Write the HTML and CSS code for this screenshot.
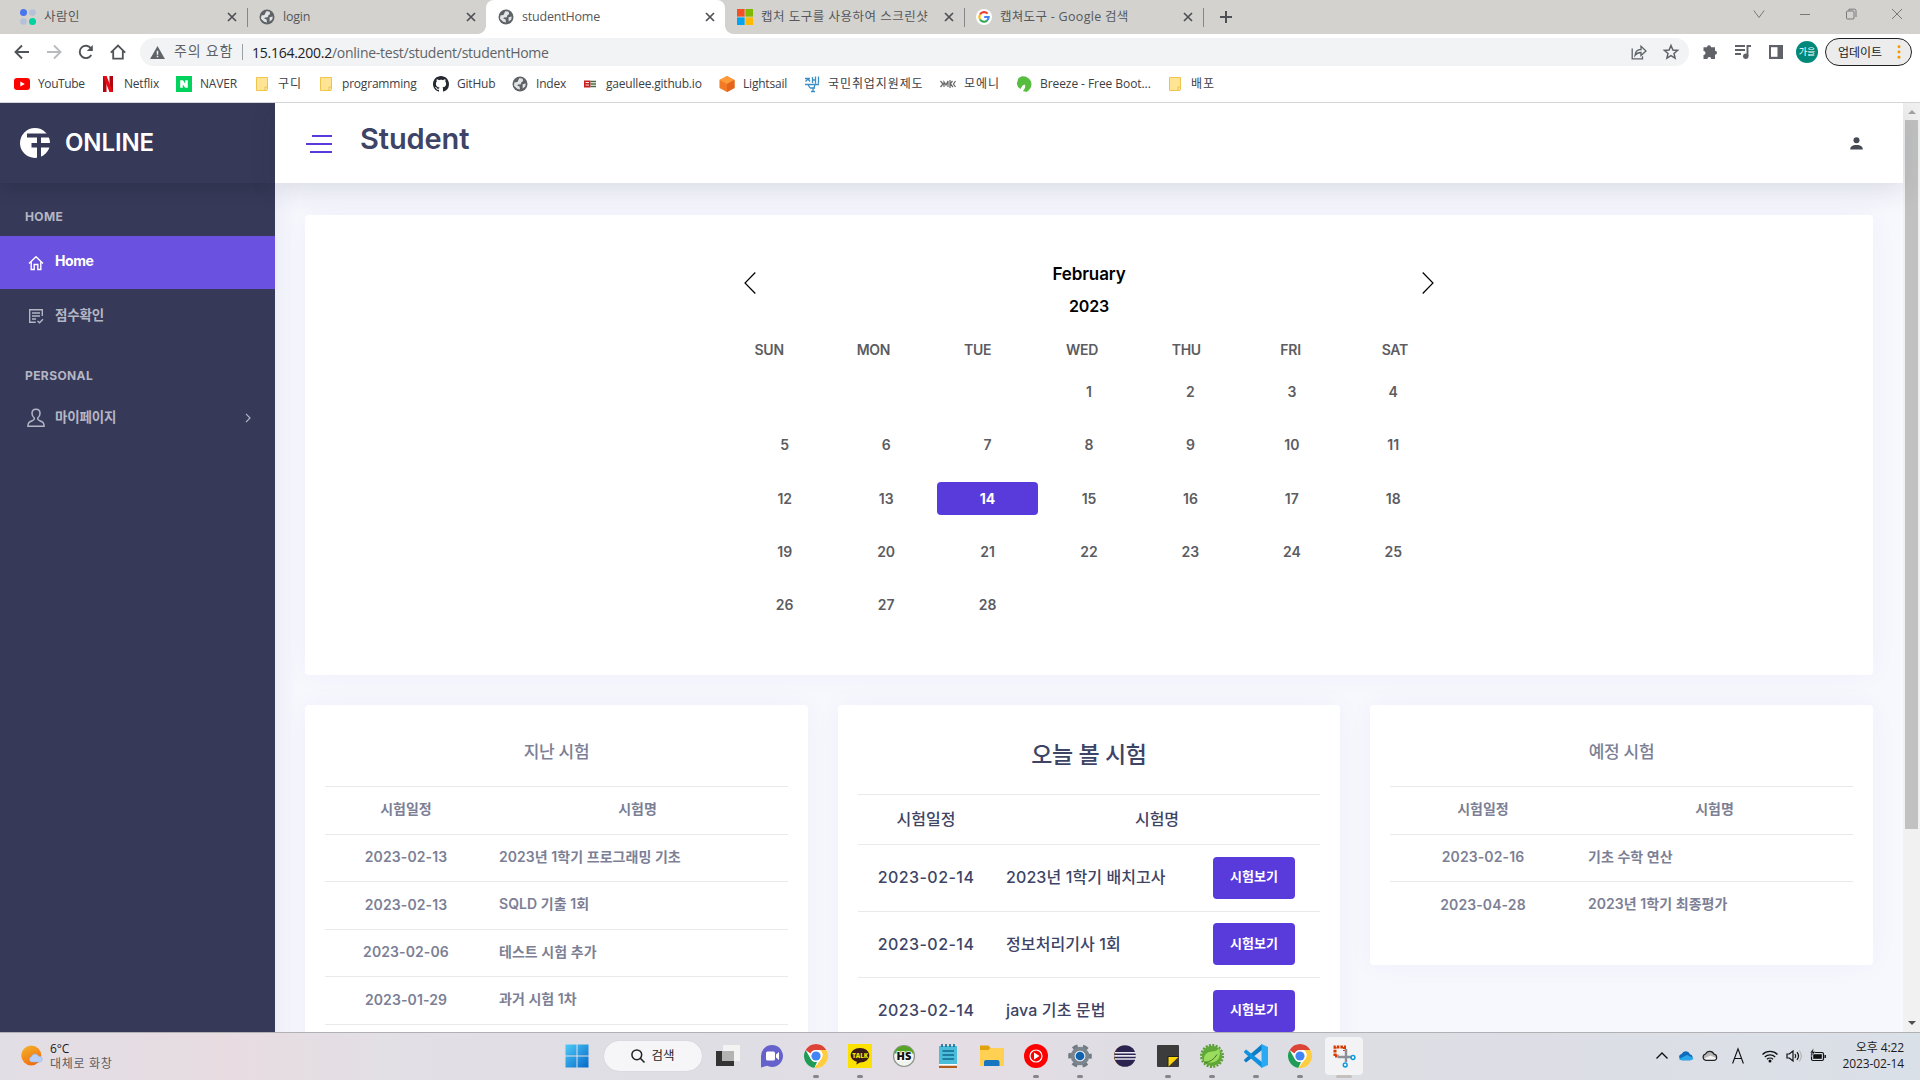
FILE: index.html
```html
<!DOCTYPE html>
<html lang="ko">
<head>
<meta charset="utf-8">
<title>studentHome</title>
<link rel="stylesheet" href="styles.css">
</head>
<body>
<svg class="defs" width="0" height="0">
  <symbol id="globe" viewBox="0 0 16 16"><circle cx="8" cy="8" r="7.5" fill="#5f6368"/><path d="M7.2 2.2 10.5 2.6 11.2 5 9.4 6.2 8.8 8.2 6 8.4 5.2 9.6 7.6 10.4 8 13.6 5.2 12.8 2 9.8 2.4 6.4 5.4 6 6.2 4.4z" fill="#f1f3f4" opacity=".9"/><path d="M10.6 8.2 13.8 7.6 13.2 10.4 10.6 12.6z" fill="#f1f3f4" opacity=".9"/></symbol>
  <symbol id="x" viewBox="0 0 10 10"><path d="M1 1 9 9M9 1 1 9" stroke="#4d5054" stroke-width="1.7"/></symbol>
  <symbol id="folder" viewBox="0 0 16 16"><path d="M2.5 1.5h11v10l-1 3h-10z" fill="#ffe494" stroke="#edc44d"/><path d="M11 14.500V11h2.500v2.200L12.800 14.500z" fill="#ffe494" stroke="#edc44d"/></symbol>
  <symbol id="chrome" viewBox="0 0 48 48"><circle cx="24" cy="24" r="24" fill="#fff"/><path d="M24 0a24 24 0 0 1 20.800 12H24a12 12 0 0 0-11 7L3.200 12A24 24 0 0 1 24 0z" fill="#dc4437"/><path d="M3.200 12 13.600 30A12 12 0 0 0 26 35.900L20.600 47.800A24 24 0 0 1 3.200 12z" fill="#1f9d58"/><path d="M44.800 12A24 24 0 0 1 20.600 47.800L34.400 30A12 12 0 0 0 32 12z" fill="#ffcd40"/><circle cx="24" cy="24" r="11.800" fill="#fff"/><circle cx="24" cy="24" r="9.200" fill="#4285f4"/></symbol>
  <symbol id="cloud" viewBox="0 0 16 11"><path d="M4 10.300a3.200 3.200 0 0 1-.4-6.300A4.600 4.600 0 0 1 12 4.200a3.100 3.100 0 0 1 .2 6.100z"/></symbol>
</svg>

<header class="tabs">
  <div class="tab"><svg class="fav" viewBox="0 0 16 16"><circle cx="3.500" cy="3.500" r="3.500" fill="#4876ef"/><circle cx="12.500" cy="3.500" r="3.300" fill="#b4c1d9"/><circle cx="3.500" cy="12.500" r="3.300" fill="#b4c1d9"/><circle cx="12.500" cy="12.500" r="3.500" fill="#00d2a0"/></svg><span class="wide">사람인</span><svg class="cls"><use href="#x"/></svg></div>
  <div class="tab"><svg class="fav"><use href="#globe"/></svg><span>login</span><svg class="cls"><use href="#x"/></svg></div>
  <div class="tab active"><svg class="fav"><use href="#globe"/></svg><span>studentHome</span><svg class="cls"><use href="#x"/></svg></div>
  <div class="tab"><svg class="fav" viewBox="0 0 16 16"><path fill="#f25022" d="M0 0h7.600v7.600H0z"/><path fill="#7fba00" d="M8.400 0H16v7.600H8.400z"/><path fill="#00a4ef" d="M0 8.400h7.600V16H0z"/><path fill="#ffb900" d="M8.400 8.400H16V16H8.400z"/></svg><span class="wide">캡처 도구를 사용하여 스크린샷</span><svg class="cls"><use href="#x"/></svg></div>
  <div class="tab"><svg class="fav" viewBox="0 0 16 16"><circle cx="8" cy="8" r="8" fill="#fff"/><g fill="none" stroke-width="2.100"><path d="M11.600 4.600A4.700 4.700 0 0 0 4 5.600" stroke="#ea4335"/><path d="M4 5.600a4.800 4.800 0 0 0 0 4.900" stroke="#fbbc05"/><path d="M4 10.500a4.700 4.700 0 0 0 7 1.100" stroke="#34a853"/><path d="M11 11.600A4.700 4.700 0 0 0 12.700 8H8.200" stroke="#4285f4"/></g></svg><span class="mid">캡쳐도구 - Google 검색</span><svg class="cls"><use href="#x"/></svg></div>
  <svg class="plus" viewBox="0 0 12 12"><path d="M6 0v12M0 6h12" stroke="#4d5054" stroke-width="2"/></svg>
  <div class="winctl">
    <svg viewBox="0 0 12 12"><path d="M.8 2.500 6 9.500 11.200 2.500"/></svg>
    <svg viewBox="0 0 12 12"><path d="M1 6.500h10"/></svg>
    <svg viewBox="0 0 12 12"><rect x="1.500" y="3" width="7.500" height="8" rx="1"/><path d="M4 3V1.200h5.500q1.500 0 1.500 1.500V9"/></svg>
    <svg viewBox="0 0 12 12"><path d="M1 1 11 11M11 1 1 11"/></svg>
  </div>
</header>

<div class="toolbar">
  <div class="nav">
    <svg viewBox="0 0 16 16"><path d="M15 8H2M8 1.500 1.500 8 8 14.500" fill="none" stroke="#505357" stroke-width="1.900"/></svg>
    <svg viewBox="0 0 16 16"><path d="M1 8H14M8 1.500 14.500 8 8 14.500" fill="none" stroke="#b9bbbd" stroke-width="1.900"/></svg>
    <svg viewBox="0 0 16 16"><path d="M13.300 11A6.200 6.200 0 1 1 13 4.300" fill="none" stroke="#505357" stroke-width="1.900"/><path d="M14.800 1v6H8.800z" fill="#505357"/></svg>
    <svg viewBox="0 0 16 16"><path d="M.8 8.600 8 1.600l7.200 7M3.200 7v7.600h9.600V7" fill="none" stroke="#505357" stroke-width="1.800"/></svg>
  </div>
  <div class="omni">
    <svg class="warn" viewBox="0 0 16 14"><path d="M8 0 16 14H0z" fill="#5f6368"/><path d="M8 5v4.500M8 10.500v1.700" stroke="#f1f3f4" stroke-width="1.600"/></svg>
    <span class="unsafe">주의 요함</span><i></i>
    <span class="url"><b>15.164.200.2</b>/online-test/student/studentHome</span>
    <svg class="oi share" viewBox="0 0 16 16"><path d="M1.200 4.500v10.300h10.300v-2.500M4 11.500c.3-4 2.800-6 6-6V2.300L15 7l-5 4.600V8.500c-2.600 0-4.500.8-6 3z" fill="none" stroke="#5f6368" stroke-width="1.300"/></svg>
    <svg class="oi" viewBox="0 0 16 16"><path d="M8 1.500 9.900 6l4.700.4-3.600 3.100 1.100 4.700L8 11.700l-4.100 2.500L5 9.500 1.400 6.400 6.100 6z" fill="none" stroke="#5f6368" stroke-width="1.500"/></svg>
  </div>
  <div class="ext">
    <svg viewBox="0 0 16 16"><path d="M5 3.200a2 2 0 0 1 4 0h4v3.600a2 2 0 0 1 0 4v4.200H9.200a1.900 1.900 0 0 0-3.800 0H1.500v-4a2 2 0 0 0 0-4V3.200z" fill="#5f6368"/></svg>
    <svg viewBox="0 0 16 16"><path d="M0 2h10M0 6h10M0 10h6M16 2h-3.500v10" fill="none" stroke="#5f6368" stroke-width="1.900"/><circle cx="10.800" cy="12.200" r="2.700" fill="#5f6368"/></svg>
    <svg viewBox="0 0 16 16"><path d="M1 1h14v14H1z" fill="#5f6368"/><path d="M3 3.200h6.500v9.600H3z" fill="#fff"/></svg>
    <span class="me">가을</span>
  </div>
  <div class="update"><span>업데이트</span><svg viewBox="0 0 4 16"><g fill="#f29900"><circle cx="2" cy="2" r="1.700"/><circle cx="2" cy="8" r="1.700"/><circle cx="2" cy="14" r="1.700"/></g></svg></div>
</div>

<nav class="marks">
  <a><svg viewBox="0 0 16 16"><rect y="2" width="16" height="12" rx="3" fill="#f00"/><path d="M6.300 5.500 10.800 8l-4.500 2.500z" fill="#fff"/></svg>YouTube</a>
  <a><svg viewBox="0 0 16 16"><path d="M3 0h3.500v16H3zM9.500 0H13v16H9.500z" fill="#b1060f"/><path d="M3 0h3.500L13 16H9.500z" fill="#e50914"/></svg>Netflix</a>
  <a><svg viewBox="0 0 16 16"><path d="M0 0h16v16H0z" fill="#03d25c"/><path d="M4.200 4.200H7l2.200 3.500V4.200h2.600v7.600H9.100L6.800 8.400v3.400H4.200z" fill="#fff"/></svg>NAVER</a>
  <a class="ko"><svg><use href="#folder"/></svg>구디</a>
  <a><svg><use href="#folder"/></svg>programming</a>
  <a><svg viewBox="0 0 16 16"><path d="M8 0C3.580 0 0 3.580 0 8c0 3.540 2.290 6.530 5.470 7.590.4.070.55-.17.55-.38 0-.19-.01-.82-.01-1.490-2.010.37-2.530-.49-2.690-.94-.09-.23-.48-.94-.82-1.130-.28-.15-.68-.52-.01-.53.63-.01 1.080.58 1.230.82.72 1.210 1.870.87 2.330.66.07-.52.28-.87.51-1.070-1.780-.2-3.640-.89-3.640-3.950 0-.87.31-1.590.82-2.150-.08-.2-.36-1.020.08-2.120 0 0 .67-.21 2.200.82.64-.18 1.320-.27 2-.27s1.360.09 2 .27c1.530-1.040 2.200-.82 2.200-.82.44 1.100.16 1.920.08 2.120.51.56.82 1.270.82 2.150 0 3.070-1.870 3.750-3.650 3.950.29.25.54.73.54 1.480 0 1.070-.01 1.930-.01 2.200 0 .21.150.46.55.38A8.010 8.010 0 0 0 16 8c0-4.420-3.580-8-8-8z" fill="#24292f"/></svg>GitHub</a>
  <a><svg><use href="#globe"/></svg>Index</a>
  <a><svg viewBox="0 0 16 16"><path d="M2 4.500h6.500v7H2z" fill="#c81e1e"/><path d="M3.500 6.500h3.500M3.500 9h3.500" stroke="#fff" stroke-width=".9"/><path d="M8.500 5.500H14M8.500 8H14M8.500 10.500H14" stroke="#4c6b40" stroke-width="1.500"/></svg>gaeullee.github.io</a>
  <a><svg viewBox="0 0 16 16"><path d="M8 0l7.500 4v8L8 16 .5 12V4z" fill="#f27a24"/><path d="M8 0l7.500 4L8 8 .5 4z" fill="#fd9a3a"/><path d="M8 8l7.500-4v8L8 16z" fill="#e4651b"/></svg>Lightsail</a>
  <a class="ko"><svg viewBox="0 0 16 16"><g fill="none" stroke="#3c8fc4" stroke-width="1.300"><path d="M1 2.500h5M1.500 5.500 4 3l2 2.500M8.500 1v6M8.500 4H11M11.500.5v7M14.500.5v7M1 8.500h14M4 8.500 6 12M11 8.500 10 12M6 12h5M9 12v4M7 15.500h4"/></g></svg>국민취업지원제도</a>
  <a class="ko"><svg viewBox="0 0 16 16"><path d="M.5 5 3 8 .5 11M4 11V6l2 3 2-4v6M10 4v8M10 8l2.500-3M10.500 8 13 11M15.500 5 13.500 8l2 3" fill="none" stroke="#666" stroke-width="1.200"/></svg>모에니</a>
  <a class="bz"><svg viewBox="0 0 16 16"><path d="M2.500 2 6 .3 9.500.5Q15.500 3 15.500 8.500 15 13 10.500 16L7 15q3-3.500 2-6.500L6.500 9.500 4.500 13 2 11 .8 7.500z" fill="#56bd3f"/></svg>Breeze - Free Boot...</a>
  <a class="ko"><svg><use href="#folder"/></svg>배포</a>
</nav>

<div class="page">
  <aside class="side">
    <div class="brand"><svg viewBox="0 0 30 30"><circle cx="15" cy="15" r="15" fill="#fff"/><path d="M7 5.500h23v4H21V15h9v4.500h-9V30h-4V19.500h-5.500V15H17V9.500H7z" fill="#363958"/></svg><strong>ONLINE</strong></div>
    <h6>HOME</h6>
    <a class="item on"><svg viewBox="0 0 18 18"><path d="M2 9.500 9 2.800l7 6.700M4.200 8v7.500h3V10.500h3.600v5h3V8" fill="none" stroke="#fff" stroke-width="1.400"/></svg><span class="h">Home</span></a>
    <a class="item"><svg viewBox="0 0 18 18"><path d="M15.300 9V2.700H2.700v12.600h6M5 6h8M5 9h8M5 12h4M10.500 14l2 1.800 3.500-3.600" fill="none" stroke="#b4b6c4" stroke-width="1.400"/></svg><span>점수확인</span></a>
    <h6 class="second">PERSONAL</h6>
    <a class="item"><svg viewBox="0 0 18 18"><path d="M9 .3c2.500 0 4 1.800 4 4.200 0 2.200-1.100 3.600-2.300 4.500-.3 1.500.6 2.200 2.600 3 2.300.9 3.700 1.500 3.800 5.200H.9c.1-3.700 1.500-4.300 3.800-5.200 2-.8 2.900-1.500 2.600-3C6.100 8.100 5 6.700 5 4.500 5 2.100 6.500.3 9 .3z" fill="none" stroke="#b4b6c4" stroke-width="1.500"/></svg><span>마이페이지</span><svg class="chev" viewBox="0 0 6 10"><path d="M1 .8 5 5 1 9.200" fill="none" stroke="#b4b6c4" stroke-width="1.200"/></svg></a>
  </aside>

  <div class="main">
    <div class="top">
      <svg class="burger" viewBox="0 0 26 18"><path d="M6 1h20M0 9h26M4 17h22" stroke="#593bdb" stroke-width="2"/></svg>
      <h1>Student</h1>
      <svg class="user" viewBox="0 0 13 13"><circle cx="6.500" cy="3.200" r="3" fill="#464a53"/><path d="M.2 12.500c0-3 2-4.500 6.300-4.500s6.300 1.500 6.300 4.500z" fill="#464a53"/></svg>
    </div>
    <div class="content">
      <section class="card cal">
        <div class="calbox">
          <div class="calhead">
            <svg viewBox="0 0 12 22"><path d="M11.300.5 1 11l10.300 10.500"/></svg>
            <div><p class="month">February</p><p class="year">2023</p></div>
            <svg viewBox="0 0 12 22"><path d="M.7.500 11 11 .7 21.500"/></svg>
          </div>
          <div class="week"><span>SUN</span><span>MON</span><span>TUE</span><span>WED</span><span>THU</span><span>FRI</span><span>SAT</span></div>
          <div class="days">
            <span></span><span></span><span></span><span>1</span><span>2</span><span>3</span><span>4</span>
            <span>5</span><span>6</span><span>7</span><span>8</span><span>9</span><span>10</span><span>11</span>
            <span>12</span><span>13</span><span class="today">14</span><span>15</span><span>16</span><span>17</span><span>18</span>
            <span>19</span><span>20</span><span>21</span><span>22</span><span>23</span><span>24</span><span>25</span>
            <span>26</span><span>27</span><span>28</span>
          </div>
        </div>
      </section>
      <div class="row">
        <section class="card list past">
          <h4>지난 시험</h4>
          <div class="tr th"><span>시험일정</span><span>시험명</span></div>
          <div class="tr"><span>2023-02-13</span><span>2023년 1학기 프로그래밍 기초</span></div>
          <div class="tr"><span>2023-02-13</span><span>SQLD 기출 1회</span></div>
          <div class="tr"><span>2023-02-06</span><span>테스트 시험 추가</span></div>
          <div class="tr"><span>2023-01-29</span><span>과거 시험 1차</span></div>
          <div class="tr"></div>
        </section>
        <section class="card list now">
          <h4>오늘 볼 시험</h4>
          <div class="tr th"><span>시험일정</span><span>시험명</span></div>
          <div class="tr"><span>2023-02-14</span><span>2023년 1학기 배치고사</span><button>시험보기</button></div>
          <div class="tr"><span>2023-02-14</span><span>정보처리기사 1회</span><button>시험보기</button></div>
          <div class="tr"><span>2023-02-14</span><span>java 기초 문법</span><button>시험보기</button></div>
        </section>
        <section class="card list next">
          <h4>예정 시험</h4>
          <div class="tr th"><span>시험일정</span><span>시험명</span></div>
          <div class="tr"><span>2023-02-16</span><span>기초 수학 연산</span></div>
          <div class="tr"><span>2023-04-28</span><span>2023년 1학기 최종평가</span></div>
        </section>
      </div>
    </div>
  </div>
  <div class="scroll"><svg viewBox="0 0 8 4"><path d="M0 4 4 0l4 4z" fill="#a3a3a3"/></svg><i></i><svg class="dn" viewBox="0 0 8 4"><path d="M0 0 4 4l4-4z" fill="#505050"/></svg></div>
</div>

<footer class="task">
  <div class="weather"><svg viewBox="0 0 22 21"><defs><linearGradient id="sun" x2=".5" y2="1"><stop stop-color="#f2b62c"/><stop offset="1" stop-color="#f2700f"/></linearGradient></defs><circle cx="10.300" cy="10.500" r="10" fill="url(#sun)"/><path d="M10.500 17a2.800 2.800 0 0 1 0-5.400 3.700 3.700 0 0 1 7-.3 2.900 2.900 0 0 1 1.500 5.700z" fill="#b9d0f8" stroke="#8fb2ee" stroke-width=".6"/></svg><p>6°C<br><em>대체로 화창</em></p></div>
  <div class="apps">
    <span class="app"><svg viewBox="0 0 24 24"><defs><linearGradient id="win" x2="1" y2="1"><stop stop-color="#4fcaf8"/><stop offset="1" stop-color="#0468c8"/></linearGradient></defs><path d="M.5.500h11v11H.5zM12.500.5h11v11h-11zM.5 12.500h11v11H.5zM12.500 12.500h11v11h-11z" fill="url(#win)"/></svg></span>
    <span class="search"><svg viewBox="0 0 14 14"><circle cx="5.800" cy="5.800" r="4.900" fill="none" stroke="#222" stroke-width="1.500"/><path d="M9.300 9.300 13.500 13.500" stroke="#222" stroke-width="1.600"/></svg>검색</span>
    <span class="app tv"><svg viewBox="0 0 24 24"><path d="M7 1h17v16H7z" fill="#f3f3f3"/><path d="M0 7h18v15H0z" fill="#333"/><path d="M6 7h12v10H6z" fill="#b3b3b3"/></svg></span>
    <span class="app"><svg viewBox="0 0 24 24"><path d="M12 1a11 11 0 1 1-5 20.800L1 23.500V12A11 11 0 0 1 12 1z" fill="#6562cb"/><rect x="6" y="7.500" width="9" height="9" rx="1.500" fill="#fff"/><path d="M16 10.500 19 8v8l-3-2.500z" fill="#fff"/></svg></span>
    <span class="app run"><svg><use href="#chrome"/></svg></span>
    <span class="app run"><svg viewBox="0 0 24 24"><path d="M0 0h24v24H0z" fill="#fbe200"/><path d="M12 4c5.200 0 9.300 3.200 9.300 7.300s-4.100 7.200-9.300 7.200l-3.700 2 .6-2.700c-3.700-1-6.200-3.600-6.200-6.500C2.700 7.200 6.800 4 12 4z" fill="#391b1b"/><text x="12" y="13.500" text-anchor="middle" font-size="6" font-weight="900" fill="#fbe200">TALK</text></svg></span>
    <span class="app"><svg viewBox="0 0 24 24"><circle cx="12" cy="12" r="10.500" fill="#f2f4ef" stroke="#8d928c" stroke-width="1.200"/><path d="M2 9.500a10.300 10.300 0 0 1 20 0z" fill="#57a527"/><text x="12" y="16.300" text-anchor="middle" font-size="11" font-weight="900" fill="#111" stroke="#fff" stroke-width="1.500" paint-order="stroke">HS</text></svg></span>
    <span class="app"><svg viewBox="0 0 24 24"><path d="M3 2h18v18H3z" fill="#49bdda"/><path d="M3 20h18v1.500H3z" fill="#fff"/><path d="M3 21.800h18V24H3z" fill="#b25c20"/><path d="M6 0v3M10 0v3M14 0v3M18 0v3M6.500 7h11.500M6.500 11h11.500M6.500 15h11.500" stroke="#12698c" stroke-width="1.600"/></svg></span>
    <span class="app"><svg viewBox="0 0 24 24"><path d="M0 1.500h8.500l2.500 3H24V22H0z" fill="#e2a20c"/><path d="M0 6h8l2.500-2H24v18H0z" fill="#ffd051"/><path d="M4 22v-4q0-2 2-2h11.500q2 0 2 2v4z" fill="#1677c0"/></svg></span>
    <span class="app run"><svg viewBox="0 0 24 24"><circle cx="12" cy="12" r="12" fill="#f00"/><circle cx="12" cy="12" r="6" fill="none" stroke="#fff" stroke-width="1.200"/><path d="M10 8.500 15.500 12 10 15.500z" fill="#fff"/></svg></span>
    <span class="app run"><svg viewBox="0 0 24 24"><circle cx="12" cy="12" r="9.800" fill="none" stroke="#707b84" stroke-width="4" stroke-dasharray="5.130 5.130" stroke-dashoffset="2.560"/><circle cx="12" cy="12" r="7.300" fill="none" stroke="#7a858e" stroke-width="4"/><circle cx="12" cy="12" r="5.300" fill="#e6ebef"/><circle cx="12" cy="12" r="4.300" fill="#0f62b0"/></svg></span>
    <span class="app"><svg viewBox="0 0 24 24"><path d="M11 1.500a10.600 10.600 0 0 0 0 21z" fill="#f09126"/><circle cx="13" cy="12" r="10.800" fill="#2b2350"/><path d="M3 8.800h21M2.300 11.900h21.600M3 15h21" stroke="#e9e7f2" stroke-width="1.600"/></svg></span>
    <span class="app run"><svg viewBox="0 0 24 24"><rect x="1" y="1" width="22" height="22" rx="1" fill="#3c3c3c"/><path d="M12 23V12.500h11z" fill="#ffd60a"/><path d="M12 23V12.500h11" fill="none" stroke="#222" /></svg></span>
    <span class="app run"><svg viewBox="0 0 24 24"><circle cx="12" cy="12" r="10.700" fill="none" stroke="#5c9b35" stroke-width="2.500" stroke-dasharray="2 1.360"/><circle cx="12" cy="12" r="10.200" fill="#5fa838"/><path d="M4 17q-1-9 8-9.500 5 0 7-3.500 2.500 8-2 12.500-5 4-13 .5z" fill="#9bdc5e"/><path d="M4.500 18.500q8-.5 12.500-8" fill="none" stroke="#3b7a21" stroke-width="1"/></svg></span>
    <span class="app run"><svg viewBox="0 0 24 24"><path d="M0 16.500 2 18.500 18 6V0L.3 15.500z" fill="#0d7dc5"/><path d="M0 7.500 2 5.500 18 18v6L.3 8.700z" fill="#1192df"/><path d="M17.500 0 24 3v18l-6.500 3z" fill="#2aaaf5"/></svg></span>
    <span class="app run"><svg><use href="#chrome"/></svg></span>
    <span class="app snip"><svg viewBox="0 0 24 24"><path d="M3 12V3h9.500v4M3 12h4" fill="none" stroke="#d83b01" stroke-width="3" stroke-dasharray="2.600 1"/><path d="M14 5v13M6 13h13" stroke="#8a9096" stroke-width="2.400"/><circle cx="21" cy="13.500" r="1.900" fill="#fff" stroke="#0d9be0" stroke-width="1.500"/><circle cx="13.200" cy="21" r="1.900" fill="#fff" stroke="#0d9be0" stroke-width="1.500"/></svg></span>
  </div>
  <div class="tray">
    <svg viewBox="0 0 16 16"><path d="M2.500 10.500 8 5l5.500 5.500" fill="none" stroke="#111" stroke-width="1.400"/></svg>
    <svg class="c1" viewBox="0 0 16 11"><use href="#cloud" fill="#0f6cbd"/><path d="M1 9 9 5l6.500 3q-.5 2.300-3.300 2.300H4Q2 10.300 1 9z" fill="#28a8ea"/></svg>
    <svg class="c2" viewBox="0 0 16 11"><use href="#cloud" fill="#b6b6b6" stroke="#222" stroke-width="1.200"/><path d="M2 8.500 8.500 5.500l5.500 2.500q-.5 1.600-2 1.600H4z" fill="#f2f2f2"/></svg>
    <svg class="a" viewBox="0 0 12 16"><path d="M.6 15.500 6 .8l5.400 14.700M2.500 10.500h7" fill="none" stroke="#111" stroke-width="1.100"/></svg>
    <svg class="w" viewBox="0 0 16 16"><path d="M.5 6.500a10.600 10.600 0 0 1 15 0M2.800 9a7.400 7.400 0 0 1 10.400 0M5 11.300a4.300 4.300 0 0 1 6 0" fill="none" stroke="#111" stroke-width="1.300"/><circle cx="8" cy="13" r="1.500" fill="#111"/></svg>
    <svg viewBox="0 0 16 16"><path d="M1 6v4h2.300L7 13V3L3.300 6z" fill="none" stroke="#111" stroke-width="1.200"/><path d="M9 6q1.500 2 0 4M11 4.200q3 3.800 0 7.600" fill="none" stroke="#111" stroke-width="1.200"/><path d="M13.300 2.500q4 5.500 0 11" fill="none" stroke="#aaa"/></svg>
    <svg viewBox="0 0 16 16"><rect x="1.500" y="4.500" width="12" height="8" rx="1.500" fill="none" stroke="#111" stroke-width="1.200"/><rect x="3.200" y="6.200" width="8.600" height="4.600" fill="#111"/><path d="M15.200 7v3" stroke="#111" stroke-width="1.400"/><path d="M3.500 0 0 5h2.500L1.500 8.500 5.500 3.500H3.200z" fill="#111" stroke="#dde1e8" stroke-width=".5"/></svg>
    <p>오후 4:22<br><span>2023-02-14</span></p>
  </div>
</footer>
</body>
</html>
```
FILE: styles.css
```css
* { box-sizing: border-box; }
body { margin: 0; width: 1920px; height: 1080px; overflow: hidden; display: flex; flex-direction: column; background: #fff; font-family: "Open Sans", "Noto Sans CJK KR", sans-serif; font-size: 12px; color: #3c4043; }
svg { display: block; flex: none; overflow: visible; }
.defs { position: absolute; }
p, h1, h4, h6 { margin: 0; }

/* browser tabs */
.tabs { display: flex; height: 34px; background: #d3d2ce; padding-left: 8px; flex: none; }
.tab { width: 239px; display: flex; align-items: center; padding: 0 10px 0 12px; position: relative; color: #55585c; line-height: 34px; white-space: nowrap; }
.tab:not(.active)::after { content: ""; position: absolute; right: -1px; top: 8px; width: 1px; height: 19px; background: #85868a; }
.tab:nth-child(2)::after { display: none; }
.tab.active { background: #fff; border-radius: 8px 8px 0 0; }
.tab.active::before, .tab.active::after { content: ""; position: absolute; bottom: 0; width: 8px; height: 8px; }
.tab.active::before { left: -8px; background: radial-gradient(circle at 0 0, transparent 7.5px, #fff 8px); }
.tab.active::after { right: -8px; background: radial-gradient(circle at 100% 0, transparent 7.5px, #fff 8px); }
.fav { width: 16px; height: 16px; margin-right: 8px; }
.tab span { flex: 1; font-size: 12.5px; letter-spacing: -.2px; }
.tab span.wide { letter-spacing: .5px; }
.tab span.mid { letter-spacing: .3px; }
.cls { width: 10px; height: 10px; }
.plus { width: 12px; height: 12px; margin: 11px 0 0 17px; }
.winctl { margin: 8px 17px 0 auto; display: flex; gap: 34px; }
.winctl svg { width: 12px; height: 12px; fill: none; stroke: #77787a; stroke-width: 1; }

/* address row */
.toolbar { display: flex; height: 36px; align-items: center; padding: 0 8px 0 14px; flex: none; }
.nav { display: flex; gap: 16px; width: 126px; }
.nav svg { width: 16px; height: 16px; }
.omni { width: 1549px; height: 28px; border-radius: 14px; background: #f1f3f4; display: flex; align-items: center; padding: 0 10px; }
.warn { width: 15px; height: 13px; margin-right: 9px; }
.unsafe { width: 68px; font-size: 14px; line-height: 26px; margin-top: -2px; color: #5f6368; letter-spacing: .8px; white-space: nowrap; }
.omni i { width: 1px; height: 16px; background: #9aa0a6; margin-right: 9px; }
.url { flex: 1; font-size: 14px; color: #5f6368; letter-spacing: -.26px; }
.url b { font-weight: 400; color: #202124; }
.oi { width: 16px; height: 16px; }
.share { margin-right: 16px; }
.ext { display: flex; align-items: center; gap: 17px; margin-left: 13px; }
.ext svg { width: 16px; height: 16px; }
.me { width: 22px; height: 22px; border-radius: 50%; background: #00897b; color: #fff; font-size: 9px; line-height: 22px; text-align: center; margin-left: -5px; white-space: nowrap; }
.update { width: 87px; height: 28px; border: 1.5px solid #202124; border-radius: 14px; background: #ececec; display: flex; align-items: center; justify-content: space-between; padding: 0 10px 1px 12px; margin-left: auto; color: #202124; font-size: 12px; letter-spacing: 0; white-space: nowrap; }
.update svg { width: 4px; height: 14px; }
.marks { height: 33px; flex: none; border-bottom: 1px solid #d3d5d8; display: grid; grid-template-columns: 86px 76px 78px 64px 115px 79px 70px 137px 85px 136px 76px 151px 60px; padding: 0 0 4px 14px; align-items: center; }
.marks a { display: flex; gap: 8px; align-items: center; white-space: nowrap; line-height: 18px; letter-spacing: -.2px; }
.marks a:first-child { letter-spacing: -.4px; }
.marks .ko { letter-spacing: .9px; }
.marks .bz { letter-spacing: -.07px; }
.marks svg { width: 16px; height: 16px; }

/* web page */
.page { flex: 1; min-height: 0; display: flex; overflow: hidden; font-family: Inter, "Noto Sans CJK KR", sans-serif; }
.side { width: 275px; background: #363958; color: #b4b6c4; flex: none; }
.brand { height: 80px; display: flex; align-items: center; padding: 0 0 0 20px; gap: 15px; box-shadow: 0 8px 16px rgba(0,0,0,.1); color: #fff; }
.brand svg { width: 30px; height: 30px; }
.brand strong { font-size: 24px; font-weight: 600; line-height: 30px; letter-spacing: -.1px; }
.side h6 { font-size: 12px; font-weight: 700; letter-spacing: .4px; line-height: 18px; padding: 25px 0 10px 25px; }
.side h6.second { padding: 25px 0 12px 25px; }
.item { height: 53px; display: flex; align-items: center; padding: 0 24px 0 27px; gap: 10px; font-size: 13.5px; font-weight: 700; letter-spacing: -.2px; }
.item svg { width: 18px; height: 18px; }
.item span { flex: 1; margin-top: -4px; }
.item .h { font-size: 14px; color: #fff; letter-spacing: -.4px; }
.item.on { background: #6b51df; }
.side .second + .item { height: 50px; margin-top: -4px; }
.item .chev { width: 6px; height: 10px; }
.main { flex: 1; background: #f7f8fe; display: flex; flex-direction: column; min-width: 0; }
.top { height: 80px; flex: none; background: #fff; box-shadow: 0 8px 26px rgba(40,44,70,.13); display: flex; align-items: center; padding: 0 40px 0 31px; position: relative; }
.burger { width: 26px; height: 18px; margin-top: 2px; }
.top h1 { font-size: 29px; font-weight: 600; color: #3d4465; margin: -9px 0 0 28px; line-height: 40px; flex: 1; letter-spacing: -.1px; }
.user { width: 13px; height: 13px; }
.content { padding: 32px 30px 0; box-shadow: inset 20px 0 20px -14px rgba(60,60,110,.07); }
.card { background: #fff; border-radius: 4px; box-shadow: 0 0 30px rgba(60,60,110,.035); }
.cal { height: 460px; }
.calbox { width: 710px; margin: 0 auto; padding-top: 42px; color: #5c5c61; font-weight: 600; font-size: 14px; }
.calhead { display: flex; justify-content: space-between; align-items: flex-start; padding: 0 10px; text-align: center; color: #000; }
.calhead svg { width: 12px; height: 22px; margin-top: 15px; fill: none; stroke: #000; stroke-width: 1.2; }
.month { font-size: 17px; line-height: 34px; letter-spacing: -.1px; }
.year { font-size: 16px; line-height: 32px; margin-top: -1px; letter-spacing: -.2px; }
.week { display: grid; grid-template-columns: repeat(7, 1fr); width: 730px; margin: 13px 0 0 -17px; line-height: 30px; text-align: center; letter-spacing: -.25px; }
.days { display: grid; grid-template-columns: repeat(7, 1fr); grid-auto-rows: 53.300px; align-items: center; text-align: center; }
.days span { line-height: 33px; }
.days .today { background: #593bdb; color: #fff; font-weight: 700; border-radius: 4px; }
.row { display: grid; grid-template-columns: 503px 502px 503px; gap: 30px; margin-top: 30px; align-items: start; }
.list { padding: 0 20px; color: #7c7f95; font-weight: 600; font-size: 14px; letter-spacing: .1px; }
.list h4 { text-align: center; font-size: 17px; font-weight: 500; line-height: 24px; padding: 35px 0 22px; letter-spacing: -.3px; }
.tr { display: grid; grid-template-columns: 162px 1fr; height: 47.500px; border-top: 1px solid #e9e9ec; align-items: center; padding-bottom: 2px; white-space: nowrap; }
.tr span:first-child { text-align: center; }
.tr span + span { padding-left: 12px; letter-spacing: .05px; padding-bottom: 2px; }
.tr.th span { letter-spacing: 0; padding-bottom: 2px; }
.th span + span { text-align: center; padding: 0; }
.next { height: 260px; }
.next .tr { grid-template-columns: 186px 1fr; }
.now { color: #3d4465; font-size: 16px; height: 420px; font-weight: 500; letter-spacing: .4px; }
.now h4 { font-size: 23px; line-height: 30px; padding: 35px 0 24px; letter-spacing: -.4px; }
.now .tr { grid-template-columns: 136px 219px 82px; height: 66.500px; padding: 0; }
.now .tr span { letter-spacing: .45px; padding-bottom: 1px; }
.now .tr span + span { letter-spacing: .1px; padding-bottom: 3px; }
.now .tr.th { grid-template-columns: 136px 1fr; height: 50px; }
.now .tr.th span { letter-spacing: 0; padding-bottom: 4px; }
.now button { width: 82px; height: 42px; border: 0; border-radius: 4px; background: #593bdb; color: #fff; font: 700 13px "Noto Sans CJK KR", sans-serif; letter-spacing: 0; padding: 0 0 4px; }
.scroll { width: 17px; background: #f1f1f1; display: flex; flex-direction: column; align-items: center; padding: 7px 0; }
.scroll svg { width: 8px; height: 4px; }
.scroll i { width: 13px; height: 709px; background: #c1c1c1; margin-top: 6px; }
.scroll .dn { margin-top: auto; }

/* taskbar */
.task { height: 48px; flex: none; border-top: 1px solid #b0b0b5; background: linear-gradient(90deg, #e2dee5, #e6dce2 10%, #e8dce1 11.500%, #e2dfe5 20%, #dfdee5 38%, #e5dde4 50%, #dedde4 60%, #dddee5 80%, #dae0e8); display: flex; align-items: center; color: #1b1b1b; padding-bottom: 2px; }
.weather { display: flex; gap: 7px; padding-left: 21px; width: 555px; align-items: center; }
.weather svg { width: 22px; height: 21px; margin-top: -1px; }
.weather p { line-height: 15px; letter-spacing: -.1px; }
.weather em { font-style: normal; color: #5b5b60; letter-spacing: .7px; }
.apps { display: flex; align-items: center; }
.app { width: 44px; height: 46px; display: flex; align-items: center; justify-content: center; position: relative; }
.app svg { width: 24px; height: 24px; font-family: "Open Sans", sans-serif; }
.search { width: 98px; height: 30px; margin: 0 4px 0 5px; border-radius: 15px; background: #f6f6f8; display: flex; align-items: center; justify-content: center; gap: 6px; font-size: 12.5px; line-height: 30px; letter-spacing: 0; box-shadow: 0 0 1px #bbb; }
.search svg { width: 14px; height: 14px; }
.run::after, .snip::after { content: ""; position: absolute; bottom: 1px; left: 19px; width: 6px; height: 3px; border-radius: 2px; background: #85858a; }
.snip::before { content: ""; position: absolute; left: 3px; top: 4px; width: 38px; height: 38px; border-radius: 4px; background: #f3f3f5; }
.snip::after { left: 14px; width: 16px; background: #c3c0bd; }
.snip svg { position: relative; }
.tray { margin-left: auto; display: flex; align-items: center; padding-right: 16px; }
.tray svg { width: 16px; height: 16px; margin-right: 8px; }
.tray svg.c1, .tray svg.c2 { height: 11px; }
.tray svg.c2 { margin-right: 14px; }
.tray svg.a { width: 12px; margin-right: 18px; }
.tray p { width: 70px; text-align: right; line-height: 16px; font-size: 12px; letter-spacing: -.1px; white-space: nowrap; }
```
